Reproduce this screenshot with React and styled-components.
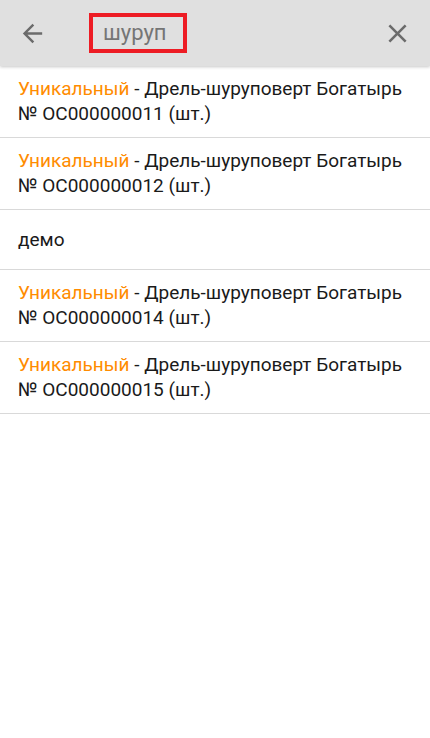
import styled, { createGlobalStyle } from "styled-components";

const items = [
  { tag: "Уникальный", name: "Дрель-шуруповерт Богатырь", code: "№ ОС000000011 (шт.)" },
  { tag: "Уникальный", name: "Дрель-шуруповерт Богатырь", code: "№ ОС000000012 (шт.)" },
  { plain: "демо" },
  { tag: "Уникальный", name: "Дрель-шуруповерт Богатырь", code: "№ ОС000000014 (шт.)" },
  { tag: "Уникальный", name: "Дрель-шуруповерт Богатырь", code: "№ ОС000000015 (шт.)" },
];

const App = () => {
  return (
    <Screen>
      <GlobalStyle />
      <Toolbar>
        <IconButton>
          <svg width="29" height="29" viewBox="0 0 24 24">
            <path fill="#6b6b6b" d="M20 11H7.83l5.59-5.59L12 4l-8 8 8 8 1.41-1.41L7.83 13H20v-2z" />
          </svg>
        </IconButton>
        <SearchBox>
          <SearchText>шуруп</SearchText>
        </SearchBox>
        <Spacer />
        <IconButton>
          <svg width="31" height="31" viewBox="0 0 24 24">
            <path fill="#6b6b6b" d="M19 6.41 17.59 5 12 10.59 6.41 5 5 6.41 10.59 12 5 17.59 6.41 19 12 13.41 17.59 19 19 17.59 13.41 12z" />
          </svg>
        </IconButton>
      </Toolbar>
      <List>
        {items.map((it, i) => (
          <Row key={i}>
            {it.plain ? (
              <RowText>{it.plain}</RowText>
            ) : (
              <RowText>
                <Tag>{it.tag}</Tag> - {it.name}
                <br />
                {it.code}
              </RowText>
            )}
          </Row>
        ))}
      </List>
    </Screen>
  );
};
export default App;

/*Styled Components*/

const GlobalStyle = createGlobalStyle`
  html, body {
    margin: 0;
    padding: 0;
    background: #fff;
  }
  body {
    font-family: Roboto, "Liberation Sans", sans-serif;
  }
`;

const Screen = styled.div`
  width: 430px;
  min-height: 738px;
  background: #fff;
`;

const Toolbar = styled.div`
  height: 66px;
  background: #e0e0e0;
  display: flex;
  align-items: center;
  padding: 0 3px 0 2px;
  box-sizing: border-box;
  box-shadow: 0 1px 3px rgba(0, 0, 0, 0.22);
  position: relative;
`;

const IconButton = styled.div`
  width: 60px;
  height: 60px;
  display: flex;
  align-items: center;
  justify-content: center;
`;

const SearchBox = styled.div`
  margin-left: 27px;
  width: 98px;
  height: 40px;
  box-sizing: border-box;
  border: 4px solid #ed1c24;
  display: flex;
  align-items: center;
  padding-left: 10px;
`;

const SearchText = styled.span`
  font-size: 22px;
  color: #757575;
  line-height: 1;
`;

const Spacer = styled.div`
  flex: 1;
`;

const List = styled.div`
  display: flex;
  flex-direction: column;
`;

const Row = styled.div`
  min-height: 60px;
  padding: 10px 18px 11px;
  box-sizing: border-box;
  border-bottom: 1px solid #d9d9d9;
  display: flex;
  align-items: center;
`;

const RowText = styled.div`
  font-size: 19px;
  line-height: 25px;
  color: #1a1a1a;
`;

const Tag = styled.span`
  color: #ff8c00;
`;
